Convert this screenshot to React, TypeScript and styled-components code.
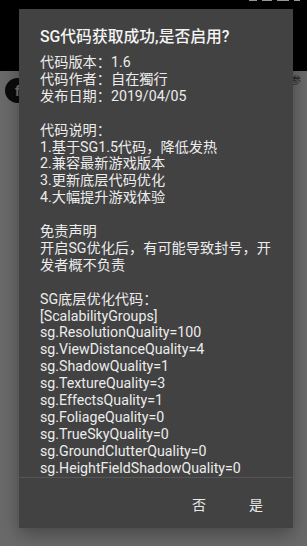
import React from "react";
import styled, { createGlobalStyle } from "styled-components";

const Global = createGlobalStyle`
  html, body { margin: 0; padding: 0; }
  body {
    width: 307px;
    height: 546px;
    overflow: hidden;
    background: #6b6b6b;
    font-family: Roboto, "Noto Sans CJK SC", sans-serif;
  }
`;

const Screen = styled.div`
  position: relative;
  width: 307px;
  height: 546px;
  overflow: hidden;
  background: #6a6a6a;
  display: flex;
  flex-direction: column;
`;

const TopBar = styled.div`
  height: 71px;
  background: #000;
  display: flex;
  justify-content: flex-end;
  align-items: flex-start;
  gap: 5px;
  padding-right: 7px;
`;

const StatusMark = styled.span<{ $w: number }>`
  display: block;
  width: ${(p) => p.$w}px;
  height: 1px;
  background: #9a9a9a;
`;

const ListRow = styled.div`
  height: 40px;
  display: flex;
  align-items: flex-start;
  justify-content: space-between;
  padding: 0 5px;
`;

const Avatar = styled.div`
  width: 25px;
  height: 25px;
  border-radius: 50%;
  background: #0b0b0b;
  margin-top: 7px;
  display: flex;
  align-items: center;
  justify-content: center;
  color: #777;
  font-size: 14px;
  font-weight: 700;
`;

const SideText = styled.span`
  font-size: 10px;
  line-height: 12px;
  color: #262626;
  margin-top: 4px;
  margin-right: 1px;
`;

const Dialog = styled.div`
  position: absolute;
  left: 19px;
  top: 9px;
  width: 274px;
  height: 519px;
  background: #424242;
  box-shadow: 0 6px 18px rgba(0, 0, 0, 0.35);
  display: flex;
  flex-direction: column;
  color: #f2f2f2;
`;

const Title = styled.div`
  padding: 18px 21px 0 21px;
  font-size: 15.8px;
  line-height: 20px;
  font-weight: 500;
  color: #f4f4f4;
  white-space: nowrap;
`;

const Message = styled.div`
  flex: 1;
  overflow: hidden;
  padding: 7px 21px 0 21px;
  font-size: 14.2px;
  line-height: 16.9px;
  color: #ececec;
`;

const Line = styled.div`
  min-height: 16.9px;
  white-space: pre-wrap;
`;

const Buttons = styled.div`
  height: 50px;
  border-top: 1px solid #555555;
  display: flex;
  justify-content: flex-end;
  align-items: center;
  padding-right: 30px;
  gap: 43px;
`;

const Btn = styled.button`
  background: none;
  border: none;
  padding: 0;
  font-family: Roboto, "Noto Sans CJK SC", sans-serif;
  font-size: 14px;
  color: #e8e8e8;
  margin-top: 2px;
`;

const lines = [
  "代码版本：1.6",
  "代码作者：自在獨行",
  "发布日期：2019/04/05",
  "",
  "代码说明：",
  "1.基于SG1.5代码，降低发热",
  "2.兼容最新游戏版本",
  "3.更新底层代码优化",
  "4.大幅提升游戏体验",
  "",
  "免责声明",
  "开启SG优化后，有可能导致封号，开发者概不负责",
  "",
  "SG底层优化代码：",
  "[ScalabilityGroups]",
  "sg.ResolutionQuality=100",
  "sg.ViewDistanceQuality=4",
  "sg.ShadowQuality=1",
  "sg.TextureQuality=3",
  "sg.EffectsQuality=1",
  "sg.FoliageQuality=0",
  "sg.TrueSkyQuality=0",
  "sg.GroundClutterQuality=0",
  "sg.HeightFieldShadowQuality=0",
];

export default function App() {
  return (
    <>
      <Global />
      <Screen>
        <TopBar>
          <StatusMark $w={8} />
          <StatusMark $w={10} />
          <StatusMark $w={12} />
          <StatusMark $w={6} />
        </TopBar>
        <ListRow>
          <Avatar>f</Avatar>
          <SideText>参</SideText>
        </ListRow>
        <Dialog>
          <Title>SG代码获取成功,是否启用?</Title>
          <Message>
            {lines.map((l, i) => (
              <Line key={i}>{l}</Line>
            ))}
          </Message>
          <Buttons>
            <Btn>否</Btn>
            <Btn>是</Btn>
          </Buttons>
        </Dialog>
      </Screen>
    </>
  );
}
